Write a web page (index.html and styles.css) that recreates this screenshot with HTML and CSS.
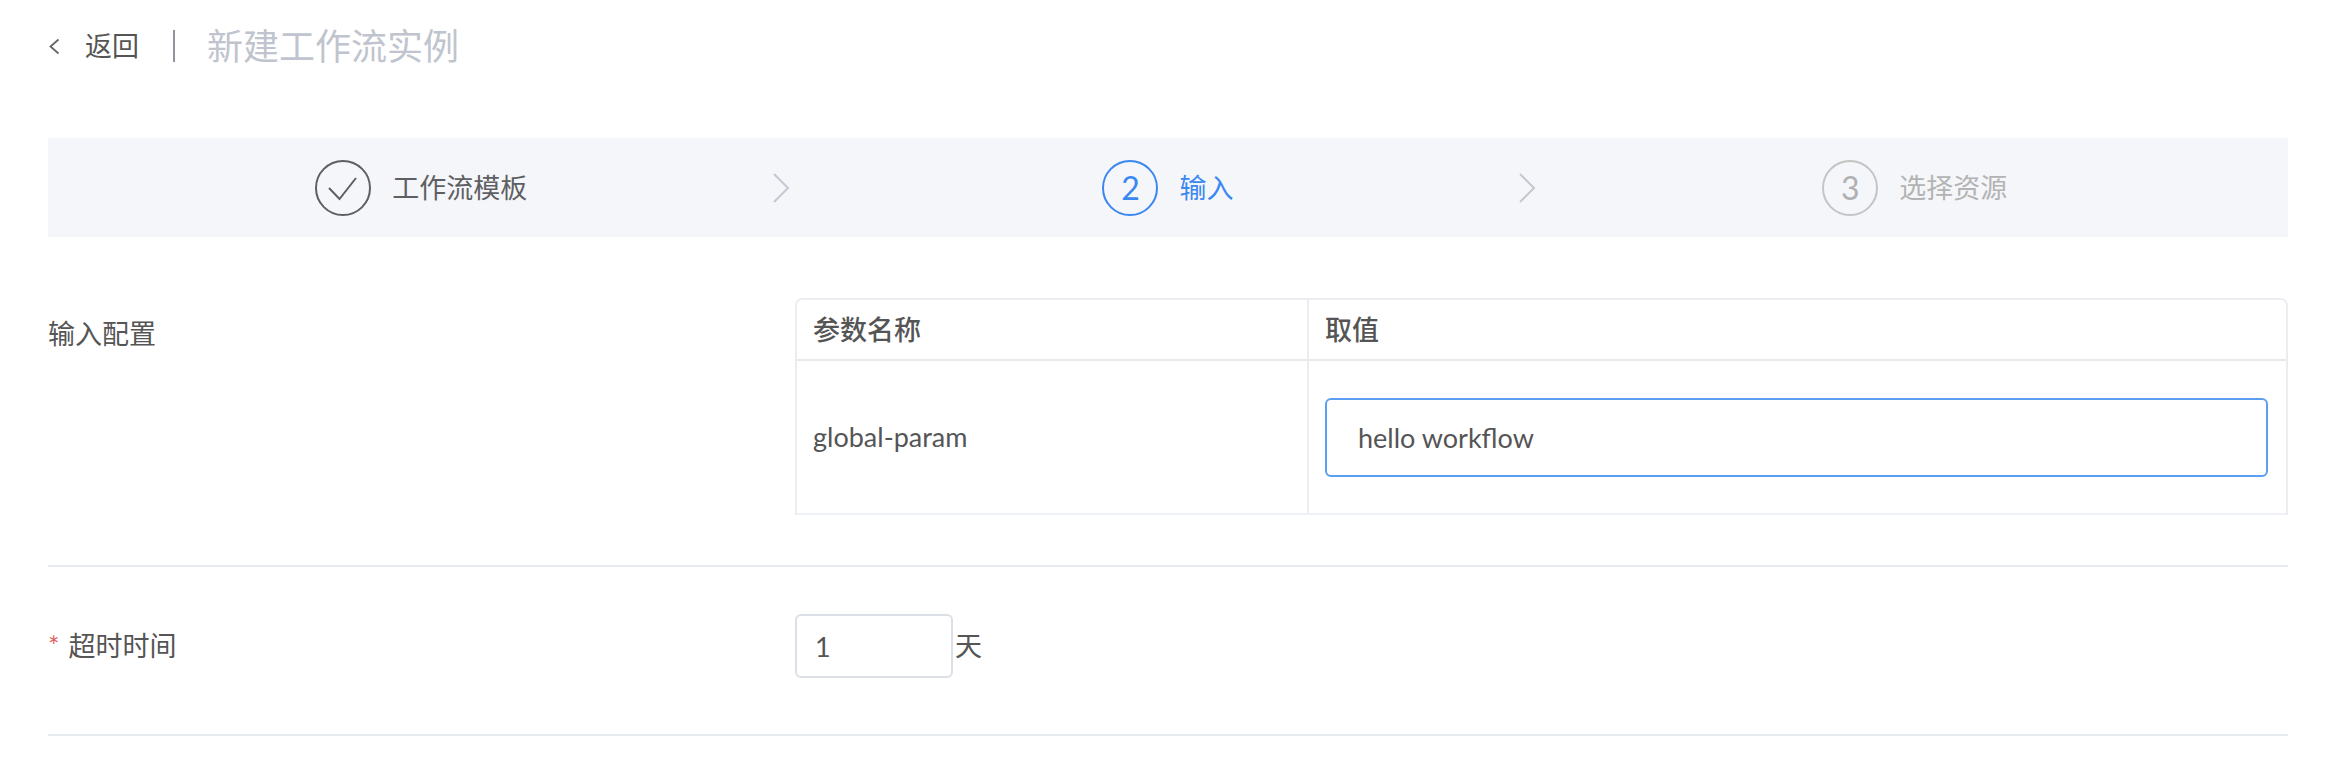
FILE: index.html
```html
<!DOCTYPE html>
<html lang="zh-CN">
<head>
<meta charset="utf-8">
<title>新建工作流实例</title>
<link rel="stylesheet" href="styles.css">
</head>
<body>
<div class="page">
  <header class="topbar">
    <a class="back" href="#">
      <svg class="back-icon" viewBox="0 0 12 17"><polyline points="10.5,1.5 2.5,8.5 10.5,15.5" fill="none" stroke="#666" stroke-width="1.8"/></svg>
      <span>返回</span>
    </a>
    <span class="sep"></span>
    <h1 class="title">新建工作流实例</h1>
  </header>

  <div class="steps">
    <div class="step step-done">
      <div class="step-main">
        <span class="step-icon">
          <svg viewBox="0 0 56 56"><polyline points="14,28 24.5,39 41,18" fill="none" stroke="#5f5f63" stroke-width="2"/></svg>
        </span>
        <span class="step-label">工作流模板</span>
      </div>
      <svg class="step-arrow" viewBox="0 0 18 30"><polyline points="2,1 16,15 2,29" fill="none" stroke="#c5c8d0" stroke-width="2"/></svg>
    </div>
    <div class="step step-active">
      <div class="step-main">
        <span class="step-icon">2</span>
        <span class="step-label">输入</span>
      </div>
      <svg class="step-arrow" viewBox="0 0 18 30"><polyline points="2,1 16,15 2,29" fill="none" stroke="#c5c8d0" stroke-width="2"/></svg>
    </div>
    <div class="step step-wait">
      <div class="step-main">
        <span class="step-icon">3</span>
        <span class="step-label">选择资源</span>
      </div>
    </div>
  </div>

  <form class="form">
    <div class="form-row row-input">
      <div class="form-label">输入配置</div>
      <div class="form-control">
        <table class="param-table">
          <thead>
            <tr><th class="col-name">参数名称</th><th>取值</th></tr>
          </thead>
          <tbody>
            <tr>
              <td class="col-name">global-param</td>
              <td class="col-value"><input class="value-input" type="text" value="hello workflow"></td>
            </tr>
          </tbody>
        </table>
      </div>
    </div>
    <div class="form-row row-timeout">
      <div class="form-label"><span class="req">*</span>超时时间</div>
      <div class="form-control">
        <input class="days" type="text" value="1">
        <span class="unit">天</span>
      </div>
    </div>
  </form>
</div>
</body>
</html>
```

FILE: styles.css
```css
* { box-sizing: border-box; }
html, body { margin: 0; background: #fff; }
body {
  font-family: Lato, "Noto Sans CJK SC", sans-serif;
  font-size: 27px;
  color: #555;
  line-height: 1.25;
}
.page { padding: 0 48px; }

/* top bar */
.topbar { height: 92px; display: flex; align-items: center; }
.back { display: flex; align-items: center; color: #555; text-decoration: none; font-size: 27px; }
.back-icon { width: 12px; height: 17px; margin-right: 25px; }
.sep { width: 2px; height: 32px; background: #8f939b; margin: 0 32px 0 34px; }
.title { margin: 0; font-size: 36px; font-weight: 400; color: #bfc4ce; }

/* steps */
.steps {
  margin-top: 46px;
  height: 99px;
  background: #f5f6fa;
  display: grid;
  grid-template-columns: repeat(3, 1fr);
}
.step { display: grid; grid-template-columns: 1fr auto 1fr; align-items: center; }
.step-main { grid-column: 2; display: flex; align-items: center; gap: 21px; }
.step-arrow { grid-column: 3; justify-self: end; width: 18px; height: 30px; margin-right: 5px; }
.step-icon {
  width: 56px; height: 56px;
  border: 2px solid currentColor;
  border-radius: 50%;
  display: flex; align-items: center; justify-content: center;
  font-size: 32px;
}
.step-icon svg { width: 56px; height: 56px; flex: none; }
.step-label { font-size: 27px; }
.step-done { color: #5f5f63; }
.step-done .step-icon { border-color: #5f5f63; }
.step-active { color: #3b87f2; }
.step-wait { color: #b3b3b3; }
.step-wait .step-icon { border-color: #c4c4c4; color: #b0b0b0; }

/* form */
.form-row { display: flex; border-bottom: 2px solid #e6e9ee; }
.row-input { margin-top: 61px; padding-bottom: 50px; align-items: flex-start; }
.row-timeout { padding: 47px 0 56px; align-items: center; }
.form-label { width: 747px; flex: none; display: flex; align-items: center; color: #555; }
.row-input .form-label { margin-top: 16px; line-height: 40px; }
.req { color: #e0625f; margin-right: 9px; font-size: 27px; }
.form-control { flex: 1; display: flex; align-items: center; }

/* table */
.param-table {
  width: 100%;
  border-collapse: separate;
  border-spacing: 0;
  border: 2px solid #ebedf1;
  border-bottom: none;
  border-radius: 7px 7px 0 0;
}
.param-table th {
  height: 61px;
  text-align: left;
  font-weight: 500;
  padding: 0 16px;
  border-bottom: 2px solid #e8e9ec;
  color: #555;
}
.param-table .col-name { width: 512px; border-right: 2px solid #ebedf1; }
.param-table td {
  height: 154px;
  padding: 0 18px 0 16px;
  border-bottom: 2px solid #eef1f6;
  vertical-align: middle;
}
.value-input {
  display: block;
  width: 100%;
  height: 79px;
  border: 2px solid #5c9ff2;
  border-radius: 6px;
  padding: 0 31px;
  font: inherit;
  color: #555;
  outline: none;
  background: #fff;
}
.days {
  width: 158px;
  height: 64px;
  border: 2px solid #dcdfe6;
  border-radius: 6px;
  padding: 0 12px 0 18px;
  font: inherit;
  color: #555;
  outline: none;
  background: #fff;
}
.unit { margin-left: 2px; }
```
